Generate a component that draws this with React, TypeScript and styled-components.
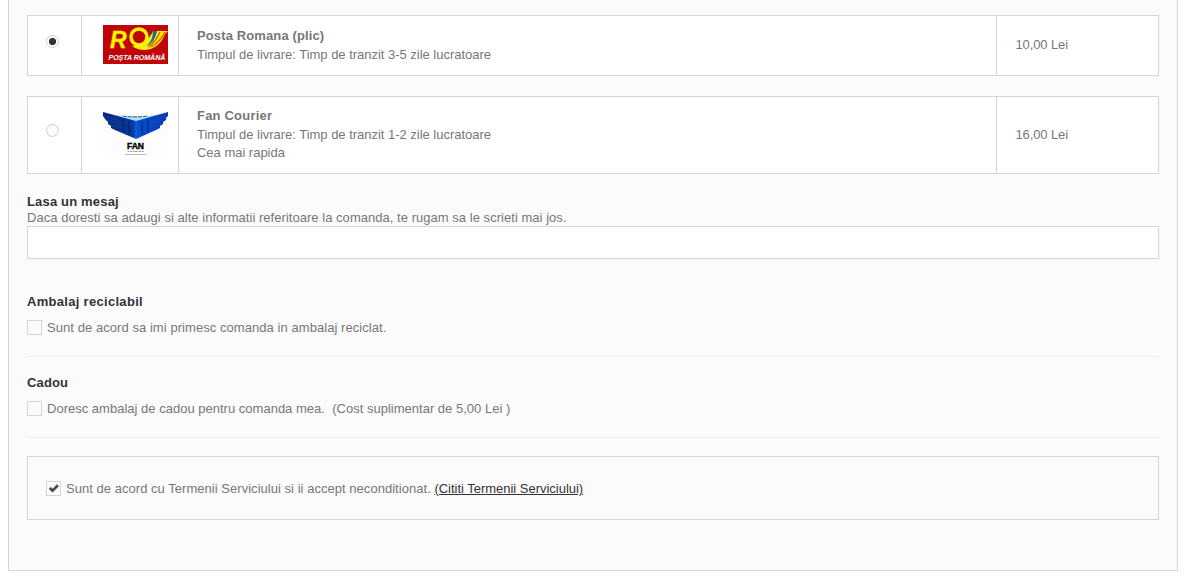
import {ReactNode, useState} from 'react';
import styled, {createGlobalStyle} from 'styled-components';

const GlobalStyle = createGlobalStyle`
  * {
    box-sizing: border-box;
  }
  body {
    margin: 0;
    background: #fff;
    color: #777;
    font-family: "Liberation Sans", Arial, sans-serif;
    font-size: 13px;
    line-height: 18px;
  }
`;

const Panel = styled.main`
  width: 1170px;
  height: 571px;
  margin-left: 8px;
  padding: 15px 18px 0;
  border: 1px solid #d6d4d4;
  border-top: none;
  background: #fbfbfb;
`;

const Option = styled.label<{$height: number}>`
  display: grid;
  grid-template-columns: 54px 97px 818px 1fr;
  width: 1132px;
  height: ${props => props.$height}px;
  margin-bottom: 20px;
  border: 1px solid #d6d4d4;
  background: #fff;
`;

const Cell = styled.div`
  padding-left: 18px;
  border-right: 1px solid #d6d4d4;
  &:last-child {
    border-right: none;
  }
`;

const RadioCell = styled(Cell)<{$top: number}>`
  padding-top: ${props => props.$top}px;
`;

const LogoCell = styled(Cell)`
  padding: 9px 0 0 21px;
  svg {
    display: block;
  }
`;

const InfoCell = styled(Cell)<{$top: number}>`
  padding-top: ${props => props.$top}px;
`;

const PriceCell = styled(Cell)<{$top: number}>`
  padding: ${props => props.$top}px 0 0 18.5px;
  letter-spacing: -0.12px;
`;

const Radio = styled.input`
  display: block;
  appearance: none;
  width: 13px;
  height: 13px;
  margin: 0;
  border: 1px solid #d0cece;
  border-radius: 50%;
  background: #fbfbfb;
  &:checked {
    background: radial-gradient(circle, #333 3.2px, #fff 4px);
  }
`;

const Name = styled.strong<{$spacing: number}>`
  display: block;
  line-height: 19px;
  letter-spacing: ${props => props.$spacing}px;
`;

const Line = styled.div<{$spacing?: number}>`
  letter-spacing: ${props => props.$spacing || 0}px;
  white-space: pre;
`;

const LineGroup = styled.div`
  padding-top: 1px;
`;

const Heading = styled.h3<{$spacing?: number}>`
  margin: 0;
  color: #333;
  font-size: 13px;
  line-height: 16px;
  letter-spacing: ${props => props.$spacing || 0}px;
`;

const Message = styled.section`
  height: 99px;
  p {
    margin: 0;
    line-height: 16px;
    letter-spacing: 0.035px;
  }
`;

const MessageInput = styled.input`
  display: block;
  width: 1132px;
  height: 33px;
  border: 1px solid #d6d4d4;
  background: #fff;
`;

const Section = styled.section`
  width: 1132px;
  height: 64px;
  margin-bottom: 17px;
  padding-top: 1px;
  border-bottom: 1px solid #eee;
`;

const CheckRow = styled.label`
  display: flex;
  align-items: flex-start;
  gap: 5px;
  height: 18px;
  margin-top: 9px;
`;

const Box = styled.span`
  display: grid;
  width: 15px;
  height: 15px;
  margin-top: 1px;
  border: 1px solid #d6d4d4;
  background: #fbfbfb;
  input,
  svg {
    grid-area: 1 / 1;
    width: 13px;
    height: 13px;
    margin: 0;
  }
  input {
    appearance: none;
  }
`;

const Terms = styled.div`
  width: 1132px;
  height: 64px;
  margin-top: 18px;
  padding: 14px 18px;
  border: 1px solid #d6d4d4;
`;

const TermsLink = styled.a`
  color: #333;
  letter-spacing: -0.02px;
  text-decoration: underline;
`;

const LogoText = styled.text`
  font-family: "Liberation Sans", Arial, sans-serif;
  font-weight: bold;
`;

const PostaLogo = () => (
  <svg width="65" height="39" viewBox="0 0 65 39">
    <rect width="65" height="39" fill="#c00509" />
    <LogoText x="7" y="23" fill="#fff200" stroke="#fff200" strokeWidth=".3" fontSize="23" fontStyle="italic">R</LogoText>
    <path d="M29 21Q44 20 50 6H65L62 9Q56 24 42 25Q34 25 29 21Z" fill="#ffed00" />
    <ellipse cx="36" cy="12" rx="8" ry="8" fill="#c00509" stroke="#fff200" strokeWidth="3.500" />
    <path d="M43 21Q50 16 50 6H54Q52 18 43 21Z" fill="#08749b" />
    <path d="M45 22Q53 17 57 7M48 22Q57 17 62 7" fill="none" stroke="#dc4a14" strokeWidth="1.200" />
    <LogoText x="5.500" y="35" fill="#fff" fontSize="7" fontStyle="italic">POȘTA ROMÂNĂ</LogoText>
  </svg>
);

const FanLogo = () => (
  <svg width="65" height="50" viewBox="0 0 65 50">
    <defs>
      <linearGradient id="wing">
        <stop offset="0" stopColor="#08267b" />
        <stop offset=".45" stopColor="#073a9d" />
        <stop offset=".51" stopColor="#0751d4" />
        <stop offset="1" stopColor="#0637ae" />
      </linearGradient>
    </defs>
    <rect width="65" height="43" y="5" fill="#fdfdfd" />
    <path d="M5 8L22 10L43 10L60 8L33 16Z" fill="#b9e3f5" />
    <path d="M0 6L33 15L65 6V10L63 12V14L60 16V18L57 20V22L53 24L33 33L12 24L8 22V20L5 18V16L2 13L0 10Z" fill="url(#wing)" />
    <path d="M20 13V26M26 15V29M39 15V29M45 13V26" stroke="#052363" strokeWidth="1" />
    <path d="M33 15V32" stroke="#1763e2" strokeWidth="1" />
    <path d="M1 10L17 15M3 14L18 18M6 18L20 22M64 10L48 15M61 14L47 18M58 18L45 22" stroke="#2459b5" strokeWidth=".4" />
    <path d="M20 10Q32 12 45 10" fill="none" stroke="#17659a" strokeWidth="1" strokeDasharray="4 1" />
    <LogoText x="24" y="43" textLength="17" lengthAdjust="spacingAndGlyphs" fill="#000" stroke="#000" strokeWidth=".4" fontSize="8.500">FAN</LogoText>
    <LogoText x="24.500" y="46" textLength="16" fill="#222" fontSize="2.500">COURIER</LogoText>
    <path d="M22 48.500H43" stroke="#aaa" strokeWidth="1" strokeDasharray="2 .5" />
  </svg>
);

interface ICheckProps {
  initial?: boolean;
  children: ReactNode;
}

function Check({initial = false, children}: ICheckProps) {
  const [checked, setChecked] = useState(initial);
  return (
    <CheckRow>
      <Box>
        <input type="checkbox" checked={checked} onChange={() => setChecked(prev => !prev)} />
        {checked && (
          <svg viewBox="0 0 13 13">
            <path d="M2.700 6L5.500 8.600L11 3.300" fill="none" stroke="#484848" strokeWidth="2.700" />
          </svg>
        )}
      </Box>
      {children}
    </CheckRow>
  );
}

const carriers = [
  {
    id: 'posta',
    name: 'Posta Romana (plic)',
    spacing: 0.12,
    lines: ['Timpul de livrare: Timp de tranzit 3-5 zile lucratoare'],
    price: '10,00 Lei',
    logo: <PostaLogo />,
    height: 61,
    radioTop: 19,
    infoTop: 10,
    priceTop: 20,
  },
  {
    id: 'fan',
    name: 'Fan Courier',
    spacing: 0.2,
    lines: ['Timpul de livrare: Timp de tranzit 1-2 zile lucratoare', 'Cea mai rapida'],
    price: '16,00 Lei',
    logo: <FanLogo />,
    height: 78,
    radioTop: 27,
    infoTop: 9,
    priceTop: 29,
  },
];

function App() {
  const [carrier, setCarrier] = useState('posta');
  return (
    <>
      <GlobalStyle />
      <Panel>
        {carriers.map(item => (
          <Option key={item.id} $height={item.height}>
            <RadioCell $top={item.radioTop}>
              <Radio type="radio" name="carrier" checked={carrier === item.id} onChange={() => setCarrier(item.id)} />
            </RadioCell>
            <LogoCell>{item.logo}</LogoCell>
            <InfoCell $top={item.infoTop}>
              <Name $spacing={item.spacing}>{item.name}</Name>
              <LineGroup>
                {item.lines.map(line => (
                  <Line key={line} $spacing={-0.02}>{line}</Line>
                ))}
              </LineGroup>
            </InfoCell>
            <PriceCell $top={item.priceTop}>{item.price}</PriceCell>
          </Option>
        ))}
        <Message>
          <Heading $spacing={0.17}>Lasa un mesaj</Heading>
          <p>Daca doresti sa adaugi si alte informatii referitoare la comanda, te rugam sa le scrieti mai jos.</p>
          <MessageInput type="text" />
        </Message>
        <Section>
          <Heading $spacing={0.3}>Ambalaj reciclabil</Heading>
          <Check>
            <Line $spacing={0.06}>Sunt de acord sa imi primesc comanda in ambalaj reciclat.</Line>
          </Check>
        </Section>
        <Section>
          <Heading $spacing={0.15}>Cadou</Heading>
          <Check>
            <Line $spacing={0.01}>Doresc ambalaj de cadou pentru comanda mea.{'  '}(Cost suplimentar de 5,00 Lei )</Line>
          </Check>
        </Section>
        <Terms>
          <Check initial>
            <Line $spacing={0.035}>
              Sunt de acord cu Termenii Serviciului si ii accept neconditionat. <TermsLink>(Cititi Termenii Serviciului)</TermsLink>
            </Line>
          </Check>
        </Terms>
      </Panel>
    </>
  );
}
export default App;
